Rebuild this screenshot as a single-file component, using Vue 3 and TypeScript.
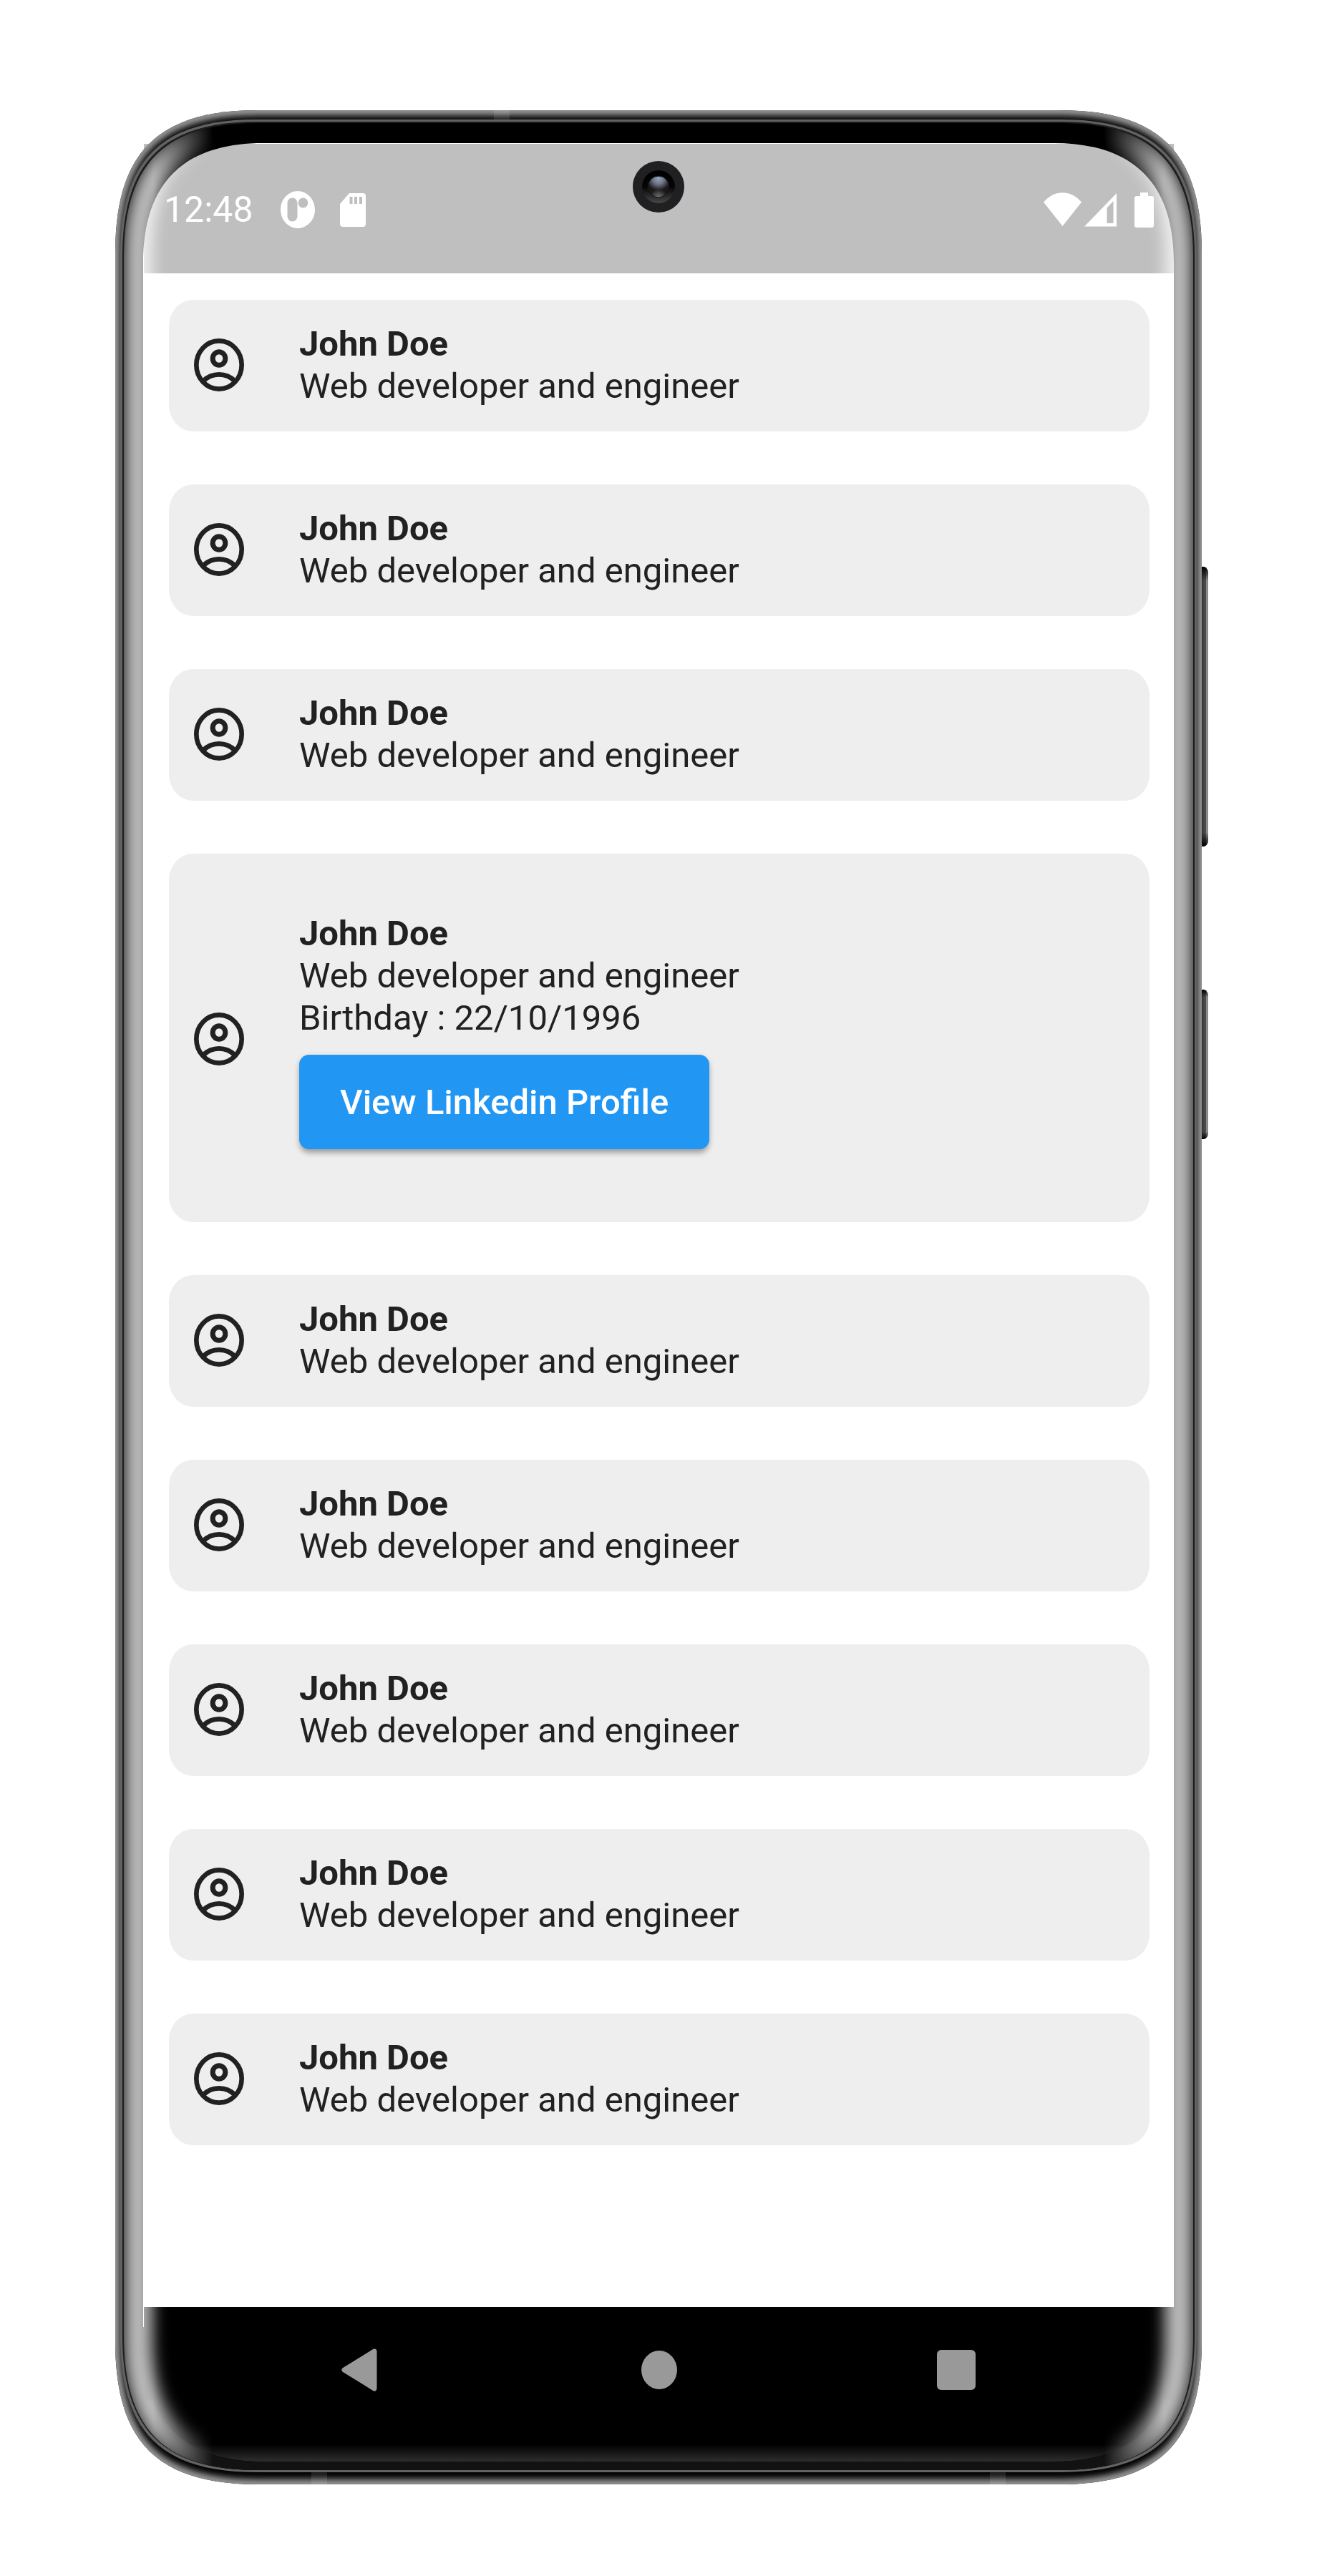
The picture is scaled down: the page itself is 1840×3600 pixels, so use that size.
<script setup lang="ts">
import { ref } from 'vue'

interface Contact {
  id: number
  name: string
  role: string
  birthday: string
}

const contacts: Contact[] = Array.from({ length: 9 }, (_, i) => ({
  id: i,
  name: 'John Doe',
  role: 'Web developer and engineer',
  birthday: '22/10/1996',
}))

const openId = ref<number | null>(3)

function toggle(id: number): void {
  openId.value = openId.value === id ? null : id
}

// Rounded outline with soft, squircle-like corners.
function outline(x0: number, y0: number, x1: number, y1: number, r: number, c: number): string {
  return [
    `M${x0} ${y0 + r}`,
    `C${x0} ${y0 + c} ${x0 + c} ${y0} ${x0 + r} ${y0}`,
    `H${x1 - r}`,
    `C${x1 - c} ${y0} ${x1} ${y0 + c} ${x1} ${y0 + r}`,
    `V${y1 - r}`,
    `C${x1} ${y1 - c} ${x1 - c} ${y1} ${x1 - r} ${y1}`,
    `H${x0 + r}`,
    `C${x0 + c} ${y1} ${x0} ${y1 - c} ${x0} ${y1 - r}`,
    'Z',
  ].join(' ')
}

const shell = outline(0, 0, 1518, 3318, 200, 59)
const ridge = outline(7, 13, 1511, 3301, 190, 57)
const groove = outline(10, 16, 1508, 3298, 188, 57)
const glass = outline(12, 18, 1506, 3298, 187, 57)
const display = outline(39, 46, 1479, 3286, 168, 56)
const glow = outline(32, 24, 1486, 3292, 176, 58)

// Opening through which the screen shows; below it the glass is black like the key bar.
const opening =
  'M39 214C39 102 95 46 207 46H1311C1423 46 1479 102 1479 214V3098H1477V3200H41V3098H39Z'

const sideKeys = [
  'M1518 638h3q6 2 6 9V1020q0 7-6 9h-3Z',
  'M1518 1229h3q6 2 6 9V1429q0 7-6 9h-3Z',
]
</script>

<template>
  <div class="page">
    <div class="phone">
      <div class="screen">
        <header class="status">
          <span class="clock">12:48</span>
          <svg class="app-icon" viewBox="0 0 48 52" aria-hidden="true">
            <path
              fill="#fff"
              fill-rule="evenodd"
              d="M24 0C37 0 48 11.600 48 26S37 52 24 52 0 40.400 0 26 11 0 24 0ZM16.500 9.500c-4 0-7 3.500-7 7.500v18c0 4 3 7.500 7 7.500s7-3.500 7-7.500V17c0-4-3-7.500-7-7.500ZM31.500 9.500c-3.800 0-6.700 3.100-6.700 7s2.900 7 6.700 7 6.700-3.100 6.700-7-2.900-7-6.700-7Z"
            />
          </svg>
          <svg class="sd-icon" viewBox="0 0 36 47" aria-hidden="true">
            <path
              fill="#fff"
              fill-rule="evenodd"
              d="M13 0H32a4 4 0 0 1 4 4V43a4 4 0 0 1-4 4H4a4 4 0 0 1-4-4V15ZM13.500 5v10h4V5ZM20 5v10h4V5ZM27 5v10h4V5Z"
            />
          </svg>
          <svg class="signal-icons" viewBox="0 0 154 49" aria-hidden="true">
            <g fill="#fff">
              <path d="M0 13.500C15-4.200 38-4.200 53 13.500L26.500 47Z" />
              <path fill-rule="evenodd" d="M57 47.500 102 1V47.500ZM97.500 12 88.500 21.500V43h9Z" />
              <path d="M135 0h11v5h5a3 3 0 0 1 3 3V46a3 3 0 0 1-3 3H130a3 3 0 0 1-3-3V8a3 3 0 0 1 3-3h5Z" />
            </g>
          </svg>
        </header>

        <main class="list">
          <article
            v-for="c in contacts"
            :key="c.id"
            class="card"
            :class="{ open: openId === c.id }"
            @click="toggle(c.id)"
          >
            <svg class="avatar" viewBox="0 0 210 222" preserveAspectRatio="none" aria-hidden="true">
              <g fill="none" stroke="#212121" stroke-width="20">
                <ellipse cx="105" cy="111" rx="95" ry="101" />
                <ellipse cx="105" cy="84" rx="26.5" ry="28" stroke-width="21" />
                <path d="M38 179C76 142 134 142 172 179" />
              </g>
            </svg>
            <div class="info">
              <h2 class="name">{{ c.name }}</h2>
              <p class="line">{{ c.role }}</p>
              <template v-if="openId === c.id">
                <p class="line">Birthday : {{ c.birthday }}</p>
                <button class="link" type="button" @click.stop>View Linkedin Profile</button>
              </template>
            </div>
          </article>
        </main>

        <nav class="keys">
          <button class="key" type="button" aria-label="Back">
            <svg width="58" height="60" viewBox="0 0 58 60" aria-hidden="true">
              <path
                d="M46 4 4 30 46 56Z"
                fill="#999"
                stroke="#999"
                stroke-width="7"
                stroke-linejoin="round"
              />
            </svg>
          </button>
          <button class="key" type="button" aria-label="Home">
            <svg width="50" height="54" viewBox="0 0 50 54" aria-hidden="true">
              <ellipse cx="25" cy="27" rx="25" ry="27" fill="#999" />
            </svg>
          </button>
          <button class="key" type="button" aria-label="Recents">
            <svg width="54" height="56" viewBox="0 0 54 56" aria-hidden="true">
              <rect width="54" height="56" rx="6" fill="#999" />
            </svg>
          </button>
        </nav>
      </div>

      <svg class="frame" viewBox="0 0 1518 3318" preserveAspectRatio="none" aria-hidden="true">
        <defs>
          <filter id="rimBlur" filterUnits="userSpaceOnUse" x="-40" y="-40" width="1598" height="3398">
            <feGaussianBlur stdDeviation="5" />
          </filter>
          <filter id="glowBlur" filterUnits="userSpaceOnUse" x="-60" y="-60" width="1638" height="3438">
            <feGaussianBlur stdDeviation="11" />
          </filter>
          <clipPath id="shellClip"><path :d="shell" /></clipPath>
          <clipPath id="glassClip"><path :d="glass" /></clipPath>
          <mask id="openingMask" maskUnits="userSpaceOnUse" x="-20" y="-20" width="1560" height="3360">
            <rect x="-20" y="-20" width="1560" height="3360" fill="#fff" />
            <path :d="opening" fill="#000" />
          </mask>
          <linearGradient id="sideFade" gradientUnits="userSpaceOnUse" x1="0" y1="0" x2="1518" y2="0">
            <stop offset="0" stop-color="#fff" />
            <stop offset=".035" stop-color="#fff" />
            <stop offset=".09" stop-color="#000" />
            <stop offset=".91" stop-color="#000" />
            <stop offset=".965" stop-color="#fff" />
            <stop offset="1" stop-color="#fff" />
          </linearGradient>
          <mask id="sideMask" maskUnits="userSpaceOnUse" x="0" y="0" width="1518" height="3318">
            <rect width="1518" height="3318" fill="url(#sideFade)" />
          </mask>
          <linearGradient id="bottomGlow" gradientUnits="userSpaceOnUse" x1="0" y1="3262" x2="0" y2="3286">
            <stop offset="0" stop-color="#2e2e2e" stop-opacity="0" />
            <stop offset="1" stop-color="#2e2e2e" />
          </linearGradient>
          <linearGradient id="chin" gradientUnits="userSpaceOnUse" x1="0" y1="3100" x2="0" y2="3286">
            <stop offset="0" stop-color="#121212" stop-opacity="0" />
            <stop offset="1" stop-color="#121212" />
          </linearGradient>
          <linearGradient id="key" x1="0" y1="0" x2="1" y2="0">
            <stop offset="0" stop-color="#333" />
            <stop offset=".3" stop-color="#444" />
            <stop offset=".62" stop-color="#4a4a4a" />
            <stop offset=".7" stop-color="#888" />
            <stop offset="1" stop-color="#8c8886" />
          </linearGradient>
          <linearGradient id="keyEnds" x1="0" y1="0" x2="0" y2="1">
            <stop offset="0" stop-color="#000" />
            <stop offset=".05" stop-color="#000" stop-opacity="0" />
            <stop offset=".95" stop-color="#000" stop-opacity="0" />
            <stop offset="1" stop-color="#000" />
          </linearGradient>
        </defs>

        <g v-for="k in sideKeys" :key="k">
          <path :d="k" fill="url(#key)" />
          <path :d="k" fill="url(#keyEnds)" />
        </g>

        <g mask="url(#openingMask)">
          <path :d="shell" fill="#000" />
          <g clip-path="url(#shellClip)">
            <path :d="shell" fill="none" stroke="#a0a0a0" stroke-width="14" filter="url(#rimBlur)" />
            <g fill="#fff" fill-opacity=".1">
              <rect x="529" y="0" width="22" height="13" />
              <rect x="274" y="3301" width="22" height="17" />
              <rect x="1222" y="3301" width="22" height="17" />
            </g>
          </g>
          <path :d="ridge" fill="#626262" />
          <path :d="groove" fill="#1c1c1c" />
          <path :d="glass" fill="#000" />
          <path :d="display" fill="url(#bottomGlow)" />
          <path :d="glass + display" fill="url(#chin)" fill-rule="evenodd" />
        </g>

        <g clip-path="url(#glassClip)">
          <g mask="url(#sideMask)">
            <path :d="glow" fill="none" stroke="#fff" stroke-opacity=".74" stroke-width="40" filter="url(#glowBlur)" />
          </g>
        </g>
      </svg>

      <svg class="camera" viewBox="0 0 72 72" aria-hidden="true">
        <defs>
          <linearGradient id="barrel" x1="0" y1="0" x2="0" y2="1">
            <stop offset="0" stop-color="#000" />
            <stop offset=".5" stop-color="#050505" />
            <stop offset="1" stop-color="#484848" />
          </linearGradient>
          <radialGradient id="lensTop" cx=".5" cy=".12" r=".55">
            <stop offset="0" stop-color="#8fa3bd" />
            <stop offset=".45" stop-color="#73788a" />
            <stop offset="1" stop-color="#1b181a" />
          </radialGradient>
          <radialGradient id="lensBottom" cx=".5" cy="1" r=".4">
            <stop offset="0" stop-color="#777" />
            <stop offset="1" stop-color="#777" stop-opacity="0" />
          </radialGradient>
        </defs>
        <circle cx="36" cy="36" r="36" fill="#202022" />
        <circle cx="36" cy="36" r="23" fill="url(#barrel)" />
        <circle cx="36" cy="36" r="15" fill="url(#lensTop)" />
        <circle cx="36" cy="36" r="15" fill="url(#lensBottom)" stroke="#111" />
      </svg>
    </div>
  </div>
</template>

<style>
body {
  margin: 0;
  background: #fff;
}
</style>

<style scoped>
.page {
  box-sizing: border-box;
  min-height: 100vh;
  display: flex;
  padding: 154px 161px 128px;
  font-family: Roboto, 'Liberation Sans', sans-serif;
  color: #212121;
}

.phone {
  position: relative;
  flex: 1;
  min-width: 0;
  display: flex;
  box-sizing: border-box;
  padding: 47px 39px 40px 40px;
}

.screen {
  flex: 1;
  min-width: 0;
  display: flex;
  flex-direction: column;
  overflow: hidden;
  border-radius: 0 0 80px 80px;
  background: #fff;
}

.frame {
  position: absolute;
  inset: 0;
  width: 100%;
  height: 100%;
  overflow: visible;
  pointer-events: none;
}

.camera {
  position: absolute;
  top: 71px;
  left: 50%;
  width: 72px;
  height: 72px;
  margin-left: -36px;
}

.status {
  box-sizing: border-box;
  height: 181px;
  display: flex;
  align-items: center;
  padding: 3px 28px 0 28px;
  background: #bfbfbf;
  color: #fff;
}

.clock {
  font-size: 50px;
  line-height: 60px;
}

.app-icon {
  width: 48px;
  height: 52px;
  margin-left: 38px;
}

.sd-icon {
  width: 36px;
  height: 47px;
  margin-left: 35px;
}

.signal-icons {
  width: 154px;
  height: 49px;
  margin-left: auto;
}

.list {
  flex: 1;
  display: flex;
  flex-direction: column;
  gap: 74px;
  padding: 37px 34px 74px 35px;
}

.card {
  display: flex;
  align-items: center;
  gap: 77px;
  padding: 32px 35px 34px;
  border-radius: 34px / 37px;
  background: #eee;
  cursor: pointer;
}

.card.open {
  padding-top: 82px;
  padding-bottom: 80px;
}

.avatar {
  flex: none;
  width: 70px;
  height: 74px;
}

.info {
  min-width: 0;
}

.name,
.line {
  margin: 0;
  font-size: 49px;
  line-height: 59px;
}

.name {
  font-weight: 700;
}

.line {
  font-weight: 400;
}

.link {
  display: block;
  height: 132px;
  margin: 22px 0;
  padding: 0 57px;
  border: 0;
  border-radius: 14px;
  background: #2196f3;
  box-shadow: 0 7px 8px -2px rgba(0, 0, 0, 0.25), 0 3px 8px rgba(0, 0, 0, 0.16);
  color: #fff;
  font: 500 49px/59px Roboto, 'Liberation Sans', sans-serif;
  cursor: pointer;
}

.keys {
  display: grid;
  grid-template-columns: repeat(3, 1fr);
  padding: 0 97px 32px;
  background: #000;
}

.key {
  height: 176px;
  display: flex;
  align-items: center;
  justify-content: center;
  padding: 0;
  border: 0;
  background: none;
  cursor: pointer;
}
</style>
